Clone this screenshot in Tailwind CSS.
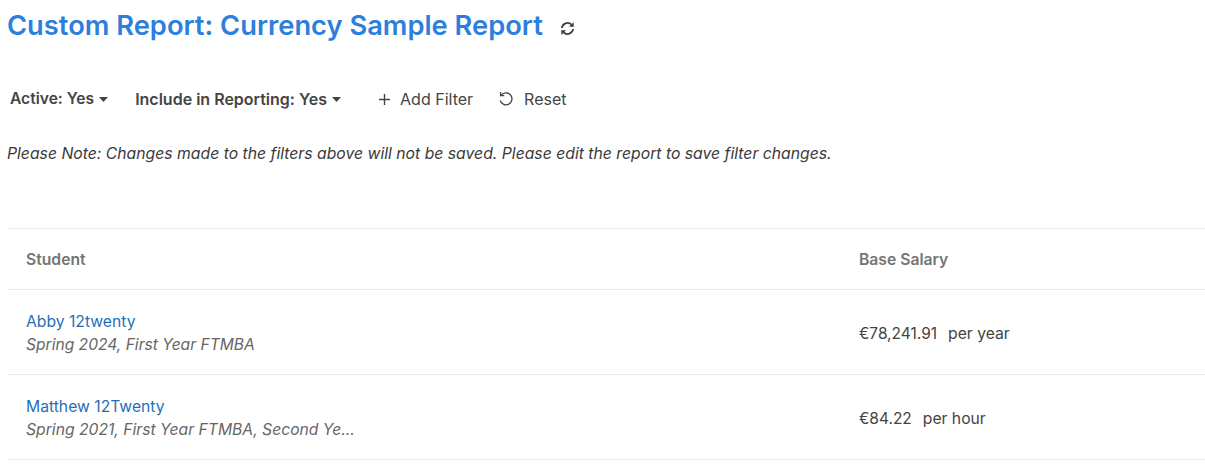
<!doctype html>
<html>
<head>
<meta charset="utf-8">
<script src="https://cdn.jsdelivr.net/npm/@tailwindcss/browser@4"></script>
</head>
<body class="bg-white font-['Inter',sans-serif] h-[464px] overflow-hidden">
<div class="pl-[7px]">
  <div class="flex items-center h-[51px]">
    <h1 class="text-[27.3px] leading-[32px] font-semibold text-[#2e7fdc]">Custom Report: Currency Sample Report</h1>
    <svg class="ml-[17px] mt-[6px] w-[15px] h-[15px]" viewBox="0 0 16 16" fill="none" stroke="#3a3a3a" stroke-width="1.8"><path d="M2 7.5a6 6 0 0 1 10.2-3.6"/><path d="M14 8.5a6 6 0 0 1-10.2 3.6"/><path d="M14.6 1.2v5H9.6z" fill="#3a3a3a" stroke="none"/><path d="M1.4 14.8v-5h5z" fill="#3a3a3a" stroke="none"/></svg>
  </div>
  <div class="flex items-center h-[26px] mt-[35px] text-[16px] text-[#444]">
    <span class="ml-[3px] font-semibold text-[15.6px]">Active: Yes</span>
    <svg class="ml-[5px] w-[9px] h-[5px]" viewBox="0 0 9 5"><path d="M0 0h9L4.5 5z" fill="#444"/></svg>
    <span class="ml-[27px] font-semibold">Include in Reporting: Yes</span>
    <svg class="ml-[5px] w-[9px] h-[5px]" viewBox="0 0 9 5"><path d="M0 0h9L4.5 5z" fill="#444"/></svg>
    <svg class="ml-[38px] w-[11px] h-[11px]" viewBox="0 0 11 11" stroke="#444" stroke-width="1.4"><path d="M5.5 0v11M0 5.5h11"/></svg>
    <span class="ml-[10px]">Add Filter</span>
    <svg class="ml-[25px] w-[16px] h-[16px]" viewBox="0 0 16 16" fill="none" stroke="#444" stroke-width="1.3"><path d="M3.2 4.2A6 6 0 1 1 2.2 9.5"/><path d="M2.6 1v3.6h3.6"/></svg>
    <span class="ml-[10px]">Reset</span>
  </div>
  <p class="mt-[32px] text-[15.75px] leading-[20px] italic text-[#3a3a3a]">Please Note: Changes made to the filters above will not be saved. Please edit the report to save filter changes.</p>
  <div class="mt-[64px] border-t border-[#ececec] text-[15.7px]">
    <div class="grid grid-cols-[814px_1fr] h-[61px] items-center border-b border-[#ececec] font-semibold text-[#757575] pl-[19px] pt-[2px]">
      <div>Student</div><div class="pl-[19px]">Base Salary</div>
    </div>
    <div class="grid grid-cols-[814px_1fr] h-[85px] items-center border-b border-[#ececec] pl-[19px]">
      <div class="pt-[2px]"><a class="block leading-[23px] text-[#1f6fb8]">Abby 12twenty</a><div class="leading-[23px] italic text-[#666] text-[15.6px]">Spring 2024, First Year FTMBA</div></div>
      <div class="pl-[19px] pt-[3px] text-[#444] text-[15.5px] flex gap-[11px]"><span>€78,241.91</span><span class="text-[15.7px]">per year</span></div>
    </div>
    <div class="grid grid-cols-[814px_1fr] h-[85px] items-center border-b border-[#ececec] pl-[19px]">
      <div class="pt-[2px]"><a class="block leading-[23px] text-[#1f6fb8]">Matthew 12Twenty</a><div class="leading-[23px] italic text-[#666] text-[15.7px]">Spring 2021, First Year FTMBA, Second Ye...</div></div>
      <div class="pl-[19px] pt-[3px] text-[#444] text-[15.5px] flex gap-[11px]"><span>€84.22</span><span class="text-[15.7px]">per hour</span></div>
    </div>
  </div>
</div>
</body>
</html>
